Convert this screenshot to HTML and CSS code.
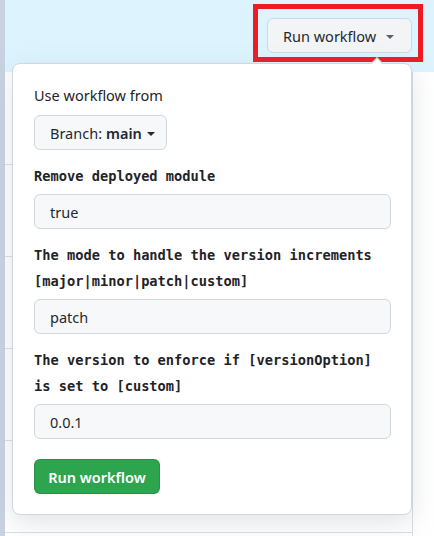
FILE: index.html
```html
<!DOCTYPE html>
<html>
<head>
<meta charset="utf-8">
<link rel="stylesheet" href="styles.css">
</head>
<body>
<div class="page">
  <div class="strip"></div>
  <div class="main">
    <div class="header">
      <div class="highlight">
        <button class="btn run-top">Run workflow <span class="caret"></span></button>
      </div>
    </div>
    <div class="list">
      <div class="row"></div>
      <div class="row"></div>
      <div class="row"></div>
      <div class="row"></div>
      <div class="row"></div>
    </div>
  </div>
</div>

<div class="popup">
  <div class="notch"></div>
  <div class="title">Use workflow from</div>
  <button class="btn branch">Branch: <strong>main</strong> <span class="caret small"></span></button>

  <div class="field">
    <label class="label">Remove deployed module</label>
    <div class="input">true</div>
  </div>
  <div class="field">
    <label class="label">The mode to handle the version increments [major|minor|patch|custom]</label>
    <div class="input">patch</div>
  </div>
  <div class="field">
    <label class="label">The version to enforce if [versionOption] is set to [custom]</label>
    <div class="input">0.0.1</div>
  </div>
  <button class="btn primary">Run workflow</button>
</div>
</body>
</html>
```

FILE: styles.css
```css
* { box-sizing: border-box; }
html, body {
  margin: 0;
  padding: 0;
  width: 434px;
  height: 536px;
  overflow: hidden;
  background: #ffffff;
  font-family: "Noto Sans", "Open Sans", sans-serif;
  color: #24292f;
}
.page {
  display: flex;
  height: 536px;
}
.strip {
  width: 5px;
  background: #c9d2e2;
  flex: none;
}
.main {
  flex: 1;
  display: flex;
  flex-direction: column;
}
.header {
  height: 72px;
  flex: none;
  background: #ddf4ff;
  display: flex;
  justify-content: flex-end;
  align-items: flex-start;
  padding: 4px 11px 0 0;
}
.highlight {
  border: 5px solid #ed1c24;
  padding: 9px 6px 4px 9px;
}
.btn {
  font-family: inherit;
  cursor: pointer;
}
.run-top {
  height: 35px;
  width: 145px;
  border: 1px solid #d0d7de;
  border-radius: 6px;
  background: #f3f4f6;
  color: #24292f;
  font-size: 14.5px;
  padding: 0 0 0 15px;
  display: flex;
  align-items: center;
  gap: 10px;
}
.caret {
  display: inline-block;
  width: 0;
  height: 0;
  border-left: 4.5px solid transparent;
  border-right: 4.5px solid transparent;
  border-top: 4.5px solid #57606a;
  margin-top: 2px;
}
.caret.small {
  border-top: 4.5px solid #24292f;
  margin-left: 1px;
}
.list {
  flex: 1;
  display: flex;
  flex-direction: column;
  border-right: 1px solid #d8dee4;
  margin-right: 21px;
}
.row {
  height: 92px;
  border-bottom: 1px solid #d8dee4;
  flex: none;
}
.row:first-child { height: 93px; }

.popup {
  position: absolute;
  left: 12px;
  top: 63px;
  width: 400px;
  height: 452px;
  background: #ffffff;
  border: 1px solid #d0d7de;
  border-radius: 8px;
  box-shadow: 0 8px 24px rgba(140, 149, 159, 0.25);
  padding: 21px 20px 19px 21px;
  display: flex;
  flex-direction: column;
  align-items: flex-start;
}
.notch {
  position: absolute;
  top: -5px;
  left: 360px;
  width: 8px;
  height: 8px;
  background: #ffffff;
  border-left: 1px solid #d0d7de;
  border-top: 1px solid #d0d7de;
  transform: rotate(45deg);
}
.title {
  font-size: 14.5px;
  line-height: 20px;
  color: #1f2328;
}
.branch {
  margin-top: 10px;
  height: 35px;
  width: 133px;
  border: 1px solid #d0d7de;
  border-radius: 6px;
  background: #f6f8fa;
  color: #24292f;
  font-size: 14.5px;
  padding: 0 0 0 15px;
  display: flex;
  align-items: center;
  gap: 4px;
  white-space: nowrap;
}
.branch strong { font-weight: 600; }
.field {
  margin-top: 13px;
  width: 100%;
  display: flex;
  flex-direction: column;
}
.label {
  font-family: "DejaVu Sans Mono", "Liberation Mono", monospace;
  font-weight: bold;
  font-size: 13.7px;
  line-height: 26px;
  color: #1f2328;
}
.input {
  margin-top: 5px;
  height: 35px;
  width: 100%;
  border: 1px solid #d0d7de;
  border-radius: 6px;
  background: #f6f8fa;
  font-size: 14.5px;
  color: #24292f;
  padding: 0 15px;
  display: flex;
  align-items: center;
}
.primary {
  margin-top: 20px;
  height: 35px;
  width: 126px;
  border: 1px solid rgba(27, 31, 36, 0.15);
  border-radius: 6px;
  background: #2da44e;
  color: #ffffff;
  font-weight: 600;
  font-size: 14.5px;
  padding: 0;
  display: flex;
  align-items: center;
  justify-content: center;
}
```
